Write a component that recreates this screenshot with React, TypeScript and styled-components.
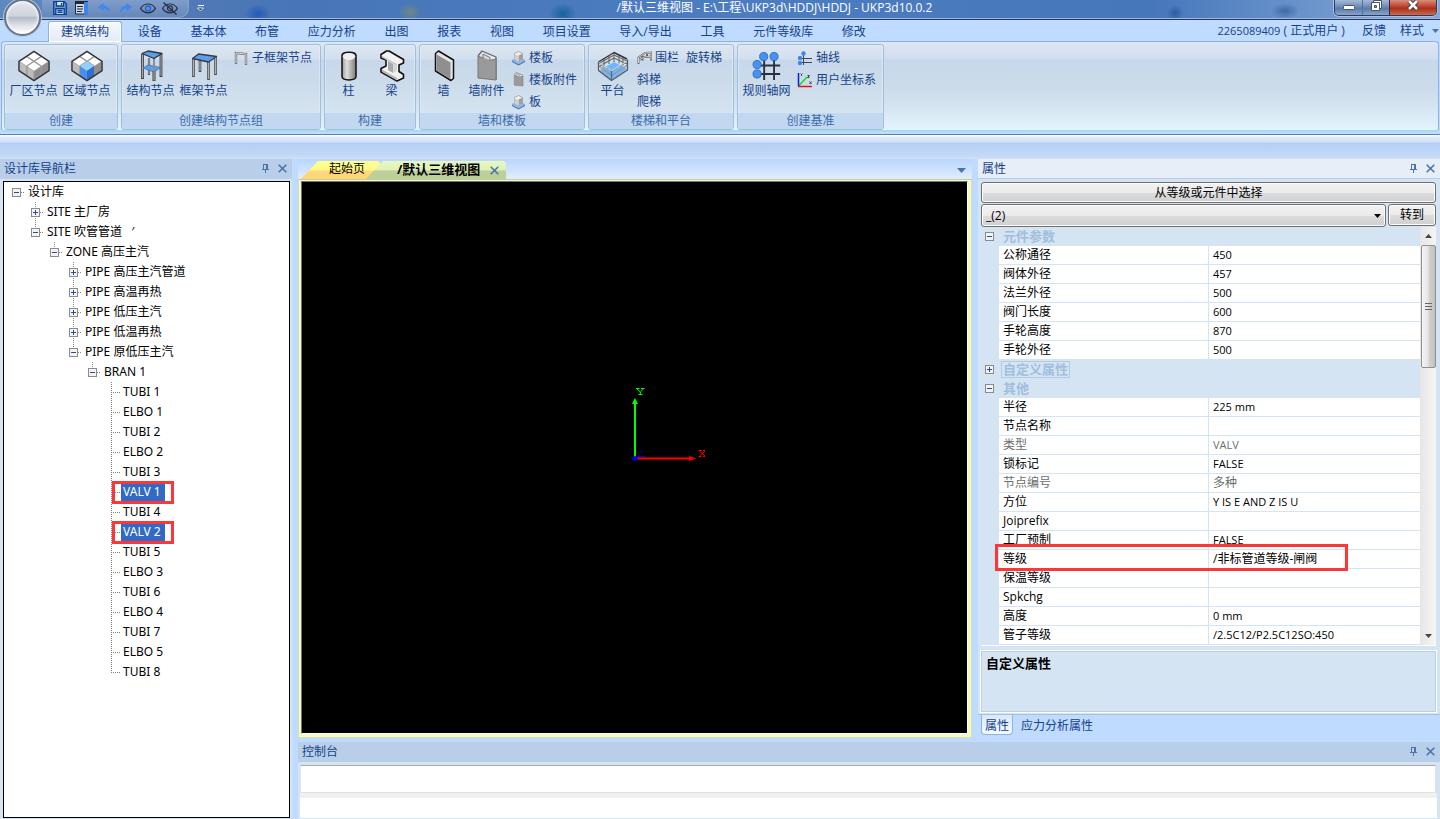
import React from 'react';
import styled, { createGlobalStyle, css } from 'styled-components';

const UI_FONT = '"Open Sans", "Noto Sans CJK SC", sans-serif';
const TREE_FONT = '"Noto Sans", "Noto Sans CJK SC", sans-serif';
const NAVY = '#15428b';

const GlobalStyle = createGlobalStyle`
  *, *::before, *::after { box-sizing: border-box; }
  body { margin: 0; background: #bfdbff; }
  button, select, textarea, input { font: inherit; color: inherit; margin: 0; padding: 0; border: 0; background: none; border-radius: 0; }
  button { cursor: pointer; white-space: nowrap; }
  a { color: inherit; text-decoration: none; }
  ul { list-style: none; margin: 0; padding: 0; }
  h2 { margin: 0; font-weight: 400; font-size: 12px; }
  svg { display: block; flex: none; }
`;

const Shell = styled.div`
  display: flex;
  flex-direction: column;
  height: 100vh;
  min-height: 640px;
  overflow: hidden;
  font: 12px/16px ${UI_FONT};
  color: #000;
  background: #bfdbff;
`;

/* ---------- Title bar ---------- */

const TitleBar = styled.header`
  flex: none;
  display: grid;
  grid-template-columns: auto 1fr auto;
  height: 20px;
  position: relative;
  border-bottom: 1px solid #27375c;
  box-shadow: inset 0 -1px 0 #9db9e0;
  background:
    radial-gradient(ellipse 13px 10px at 258px 14px, #2359b9 0%, #2359b900 100%),
    radial-gradient(ellipse 12px 9px at 410px 12px, #6f8784 0%, #6f878400 100%),
    radial-gradient(ellipse 14px 11px at 563px 14px, #17639b 0%, #17639b00 100%),
    radial-gradient(ellipse 8px 8px at 1175px 13px, #2b5ba2 0%, #2b5ba200 100%),
    radial-gradient(ellipse 14px 8px at 1285px 11px, #4069a8 0%, #4069a800 100%),
    linear-gradient(90deg, #5f88bf 0, #5079b5 200px, #4775b8 300px, #4c7dc1 50%, #4677bb 80%, #6f97cd 92%, #86a7d3 100%);
`;

const AppButton = styled.button`
  position: absolute;
  z-index: 3;
  left: 4px;
  top: -1px;
  width: 37px;
  height: 37px;
  border-radius: 50%;
  border: 2px solid #66748c;
  background: linear-gradient(#e3e6ec 0, #cfd3dc 46%, #b2b9c6 49%, #dfe3ea 75%, #ffffff 100%);
  box-shadow: 0 0 0 1px #b7c7de, inset 0 0 3px 1px #ffffff;
`;

const QuickAccess = styled.div`
  display: flex;
  align-items: center;
  gap: 6px;
  height: 18px;
  margin-left: 42px;
  padding: 0 8px 2px 10px;
  width: 147px;
  border: 1px solid #87a5cf;
  border-top: 0;
  border-left: 0;
  border-radius: 0 0 10px 0;
  background: linear-gradient(#7f9dc9, #6588bb);
`;

const QuickButton = styled.button`
  width: 16px;
  height: 16px;
  flex: none;
`;

const TitleLeft = styled.div`
  display: flex;
  gap: 7px;
  align-items: flex-start;
`;

const TitleText = styled.div`
  text-align: center;
  line-height: 16px;
  color: #fff;
  white-space: pre;
  padding-left: 10px;
`;

const WindowControls = styled.div`
  display: flex;
  height: 16px;
  margin-right: 3px;
  border: 1px solid #2c3c5c;
  border-top: 0;
  border-radius: 0 0 5px 5px;
  overflow: hidden;
  box-shadow: 0 0 0 1px #a9c1e2;
`;

const WindowButton = styled.button<{ $danger?: boolean }>`
  display: flex;
  justify-content: center;
  width: ${p => (p.$danger ? 47 : 27)}px;
  height: 15px;
  border-left: 1px solid ${p => (p.$danger ? '#4b2030' : '#5a7099')};
  background: ${p => p.$danger
    ? 'linear-gradient(#d98d7c 0, #bd4a33 40%, #a8301a 55%, #cf6a4c 100%)'
    : 'linear-gradient(#a4bad9 0, #6f8ab5 45%, #587aaa 55%, #87a4cd 100%)'};
  &:first-child { border-left: 0; }
`;

/* ---------- Ribbon ---------- */

const TabBar = styled.nav`
  flex: none;
  display: flex;
  justify-content: space-between;
  height: 22px;
  padding: 1px 5px 0 48px;
  color: ${NAVY};
`;

const TabList = styled.div`
  display: flex;
  justify-content: space-between;
  flex: 0 1 831px;
`;

const RibbonTab = styled.button<{ $active?: boolean }>`
  height: 21px;
  padding: 0 12px;
  line-height: 20px;
  border: 1px solid transparent;
  ${p => p.$active && css`
    position: relative;
    z-index: 1;
    border-color: #8db2e3;
    border-bottom: 0;
    border-radius: 3px 3px 0 0;
    background: linear-gradient(#f6faff, #e1eaf6);
    box-shadow: inset 0 0 0 1px #ffffff;
  `}
`;

const AccountBar = styled.div`
  display: flex;
  align-items: center;
  gap: 14px;
  height: 20px;
  white-space: pre;
  margin-right: -4px;
`;

const Digits = styled.span`
  font-size: 11px;
`;

const StyleMenu = styled.button`
  display: flex;
  align-items: center;
  gap: 8px;
`;

const Ribbon = styled.section`
  flex: none;
  display: flex;
  gap: 3px;
  margin: -1px 1px 0 1px;
  height: 91px;
  padding: 2px 2px 3px 2px;
  border: 1px solid #8db2e3;
  border-bottom: 2px solid #a6dcee;
  border-radius: 4px;
  background: linear-gradient(#dde7f4 0, #d1ddee 17px, #c7d8ed 18px, #cbdbe9 45px, #d6e6f3 68px, #e4f4fd 100%);
`;

const Group = styled.div<{ $width: number }>`
  display: flex;
  flex-direction: column;
  flex: 0 0 ${p => p.$width}px;
  height: 86px;
  border: 1px solid #9fbfdb;
  border-radius: 3px;
  box-shadow: inset 0 0 0 1px #e8f1fa80;
  background: linear-gradient(#dde7f3 0, #d3dfed 14px, #c8d8ec 15px, #cbdbe9 35px, #dbe8f5 100%);
  overflow: hidden;
`;

const GroupBody = styled.div`
  flex: 1;
  display: flex;
  padding: 2px 0 0 2px;
  color: ${NAVY};
`;

const GroupCaption = styled.div`
  height: 16px;
  line-height: 15px;
  text-align: center;
  color: #3e6aaa;
  background: #c1d8f0;
`;

const LargeButton = styled.button<{ $width?: number }>`
  display: flex;
  flex-direction: column;
  align-items: center;
  width: ${p => p.$width ?? 53}px;
  height: 54px;
  padding-top: 3px;
  line-height: 16px;
  flex: none;
  svg { margin-bottom: 1px; }
`;

const SmallColumn = styled.div<{ $gap?: number }>`
  display: flex;
  flex-direction: column;
  margin-left: ${p => p.$gap ?? 4}px;
`;

const SmallRow = styled.div`
  display: flex;
  gap: 7px;
`;

const SmallButton = styled.button`
  display: flex;
  align-items: center;
  gap: 3px;
  height: 22px;
  padding-bottom: 1px;
`;

const Strip = styled.div`
  flex: none;
  height: 25px;
  margin-top: 2px;
  border-top: 1px solid #5581bd;
  background: linear-gradient(#ffffff 0, #ffffff 1px, #dfeafb 2px, #d0e1f8 7px, #b4d0f4 8px, #c2d8f6 20px, #cfe0f7 100%);
`;

/* ---------- Docked panels ---------- */

const Workspace = styled.main`
  flex: 1;
  min-height: 0;
  display: grid;
  grid-template-columns: 292px minmax(0, 1fr);
  gap: 6px;
`;

const RightSide = styled.div`
  display: flex;
  flex-direction: column;
  gap: 4px;
  min-height: 0;
`;

const UpperRow = styled.div`
  flex: 1;
  min-height: 0;
  display: grid;
  grid-template-columns: minmax(0, 1fr) 462px;
  gap: 6px;
`;

const Panel = styled.section`
  display: flex;
  flex-direction: column;
  min-height: 0;
  background: #d5e4f2;
`;

const PanelHeader = styled.header<{ $light?: boolean }>`
  flex: none;
  display: flex;
  align-items: center;
  justify-content: space-between;
  height: 20px;
  padding: 0 5px 0 4px;
  color: ${NAVY};
  border-bottom: 1px solid ${p => (p.$light ? '#b5cde9' : '#b8cee9')};
  background: ${p => (p.$light ? '#e7eef7' : '#b8cee9')};
`;

const PanelTools = styled.div`
  display: flex;
  gap: 8px;
`;

const TreeBox = styled.div`
  flex: 1;
  min-height: 0;
  overflow: hidden;
  margin: 2px 2px 1px 3px;
  padding-left: 8px;
  border: 1px solid #000;
  background: #fff;
  font-family: ${TREE_FONT};
`;

const dots = 'repeating-linear-gradient(#808080 0 1px, transparent 1px 2px)';

const Branch = styled.ul`
  margin-left: 19px;
  & > li { background: ${dots} 4px 0 / 1px 100% no-repeat; }
  & > li:last-child { background-size: 1px 10px; }
`;

const TreeRow = styled.div`
  display: flex;
  align-items: center;
  height: 20px;
  white-space: pre;
`;

const Expander = styled.button`
  width: 9px;
  height: 9px;
  flex: none;
`;

const Connector = styled.span<{ $leaf?: boolean }>`
  flex: none;
  width: ${p => (p.$leaf ? 9 : 4)}px;
  height: 1px;
  margin: 0 1px 0 ${p => (p.$leaf ? 4 : 0)}px;
  background: repeating-linear-gradient(90deg, #808080 0 1px, transparent 1px 2px);
`;

const NodeLabel = styled.span<{ $selected?: boolean }>`
  position: relative;
  height: 17px;
  line-height: 16px;
  padding: 0 4px 0 2px;
  background: ${p => (p.$selected ? '#316ac5' : 'transparent')};
  color: ${p => (p.$selected ? '#fff' : '#000')};
`;

const TreeMark = styled.span`
  position: absolute;
  left: -9px;
  top: -3px;
  width: 62px;
  height: 23px;
  border: 3px solid #fb3737;
`;

/* ---------- Document area ---------- */

const DocArea = styled.section`
  display: flex;
  flex-direction: column;
  min-height: 0;
`;

const DocTabs = styled.div`
  flex: none;
  display: flex;
  align-items: flex-end;
  height: 21px;
  padding-left: 3px;
  background: linear-gradient(#b9d6fd, #e1edfd);
  border-bottom: 1px solid #c0d09a;
`;

const DocTab = styled.div<{ $active?: boolean }>`
  display: flex;
  align-items: center;
  height: 18px;
  padding-bottom: 2px;
  clip-path: polygon(17px 0, calc(100% - 2px) 0, 100% 2px, 100% 100%, 0 100%);
  ${p => p.$active
    ? css`
      width: 140px;
      margin-left: -14px;
      padding-left: 31px;
      gap: 10px;
      font-size: 13px;
      font-weight: 700;
      background: linear-gradient(#e8f8c4 0, #dff0b8 50%, #bed09a 55%, #bccf98 100%);
    `
    : css`
      width: 79px;
      padding-left: 28px;
      background: linear-gradient(#ffff9a 0, #fffa80 50%, #ffd880 55%, #ffd470 100%);
    `}
`;

const TabClose = styled.button`
  padding-top: 3px;
`;

const DocMenuButton = styled.button`
  margin: 0 6px 6px auto;
`;

const ViewportFrame = styled.div`
  flex: 1;
  min-height: 0;
  display: flex;
  padding: 1px 3px 3px 2px;
  border: 1px solid #d5e0ae;
  border-top: 0;
  background: #f4f9c8;
`;

const Viewport = styled.div`
  flex: 1;
  display: grid;
  place-items: center;
  background: #000;
  border: 1px solid #737373;
  border-right-color: #fff;
  border-bottom-color: #fff;
`;

/* ---------- Properties ---------- */

const PropBody = styled.div`
  flex: 1;
  min-height: 0;
  display: flex;
  flex-direction: column;
  padding: 3px 4px 2px 3px;
  border-bottom: 1px solid #a5c1e2;
`;

const classic = css`
  border: 1px solid #707070;
  border-radius: 3px;
  box-shadow: inset 0 0 0 1px #fcfcfc;
  background: linear-gradient(#f2f2f2 0, #ebebeb 50%, #dddddd 51%, #cfcfcf 100%);
`;

const WideButton = styled.button`
  ${classic}
  flex: none;
  height: 21px;
  line-height: 18px;
`;

const SelectRow = styled.div`
  flex: none;
  display: flex;
  gap: 2px;
  margin-top: 1px;
  height: 23px;
`;

const SelectWrap = styled.label`
  flex: 1;
  display: grid;
  align-items: center;
  & > * { grid-area: 1 / 1; }
  & > svg { justify-self: end; margin-right: 5px; pointer-events: none; }
`;

const NodeSelect = styled.select`
  ${classic}
  appearance: none;
  height: 23px;
  padding: 0 4px;
`;

const GoButton = styled.button`
  ${classic}
  width: 48px;
  height: 22px;
`;

const GridFrame = styled.div`
  flex: 1;
  min-height: 0;
  display: flex;
  border-bottom: 1px solid #fff;
`;

const GridClip = styled.div`
  flex: 1;
  overflow: hidden;
`;

const PropTable = styled.table`
  width: 100%;
  border-collapse: separate;
  border-spacing: 0;
  table-layout: fixed;
  td, th { padding: 0; height: 19px; line-height: 18px; text-align: left; font-weight: 400; white-space: nowrap; }
`;

const GutterCol = styled.col`width: 18px;`;
const NameCol = styled.col`width: 209px;`;

const CategoryLabel = styled.th`
  && { font-size: 13px; font-weight: 700; padding-left: 4px; color: #a0bfdd; }
`;

const FocusBox = styled.span<{ $focused?: boolean }>`
  display: block;
  width: max-content;
  height: 17px;
  line-height: 16px;
  ${p => p.$focused && css`
    line-height: 14px;
    margin-left: -2px;
    padding: 0 1px;
    border: 1px solid #b2cae8;
  `}
`;

const PropName = styled.th<{ $muted?: boolean }>`
  && { position: relative; padding-left: 4px; }
  background: #fff;
  color: ${p => (p.$muted ? '#6d6d6d' : '#000')};
  border-bottom: 1px solid #d5e4f2;
`;

const PropValue = styled.td<{ $muted?: boolean; $latin?: boolean }>`
  && { padding-left: 4px; }
  background: #fff;
  color: ${p => (p.$muted ? '#6d6d6d' : '#000')};
  font-size: ${p => (p.$latin ? 11 : 12)}px;
  border-bottom: 1px solid #d5e4f2;
  border-left: 1px solid #d5e4f2;
`;

const GutterCell = styled.td`
  background: #d5e4f2;
  ${Expander} { display: block; margin-left: 4px; }
`;

const PropMark = styled.span`
  position: absolute;
  z-index: 1;
  left: -4px;
  top: -6px;
  width: 353px;
  height: 27px;
  border: 3px solid #fb3737;
`;

const ScrollTrack = styled.div`
  flex: none;
  display: flex;
  flex-direction: column;
  align-items: center;
  width: 16px;
  background: linear-gradient(90deg, #e6e6e6, #f5f5f5);
`;

const ScrollArrow = styled.button<{ $end?: boolean }>`
  display: grid;
  place-items: center;
  width: 16px;
  height: 18px;
  margin-top: ${p => (p.$end ? 'auto' : 0)};
`;

const ScrollThumb = styled.div`
  display: grid;
  place-items: center;
  width: 15px;
  height: 123px;
  border: 1px solid #909090;
  border-radius: 2px;
  background: linear-gradient(90deg, #f4f4f4 0, #e6e6e6 45%, #d2d2d2 55%, #c0c0c0 100%);
`;

const Description = styled.div`
  flex: none;
  height: 61px;
  margin-top: 5px;
  padding: 3px 4px;
  font-size: 13px;
  font-weight: 700;
  border: 1px solid #b8cee9;
  box-shadow: 0 0 0 1px #fff;
`;

const BottomTabs = styled.div`
  flex: none;
  display: flex;
  gap: 4px;
  height: 23px;
  padding-left: 3px;
  background: #bfdbff;
  color: ${NAVY};
`;

const BottomTab = styled.button<{ $active?: boolean }>`
  height: 20px;
  padding: 2px 3px 0;
  border: 1px solid transparent;
  border-top: 0;
  ${p => p.$active && css`
    border-color: #8db2e3;
    border-radius: 0 0 4px 4px;
    background: linear-gradient(#dbe8f6, #f6faff);
  `}
`;

/* ---------- Console ---------- */

const Console = styled(Panel)`
  flex: none;
  height: 77px;
`;

const ConsoleLog = styled.textarea`
  flex: none;
  display: block;
  resize: none;
  height: 28px;
  margin: 3px 4px 0 2px;
  && { border: 1px solid #dbe4ee; border-top-color: #a9a9a9; background: #fff; }
`;

const ConsoleInput = styled.input`
  flex: none;
  height: 25px;
  margin: 0 3px 0 2px;
  && { border-top: 5px solid #f0f0f0; background: #fff; }
`;

/* ---------- Glyphs ---------- */

const PinIcon = () => (
  <svg width="9" height="9" viewBox="0 0 9 9" fill="none" stroke="#4b74ae" shapeRendering="crispEdges">
    <path d="M2.5 0v6M2 .5h4M1 5.5h7M4.5 6v3" /><path d="M6 0v6" strokeWidth="2" />
  </svg>
);
const CloseIcon = () => (
  <svg width="9" height="9" viewBox="0 0 9 9" stroke="#4b74ae" strokeWidth="1.6"><path d="M.7.7l7.6 7.6M8.3.7L.7 8.3" /></svg>
);
const ArrowGlyph = ({ up, color = '#4b74ae', size = 9 }: { up?: boolean; color?: string; size?: number }) => (
  <svg width={size} height={size === 9 ? 5 : 4} viewBox="0 0 9 5" preserveAspectRatio="none" fill={color}><path d={up ? 'M0 5L4.5 0 9 5z' : 'M0 0h9L4.5 5z'} /></svg>
);
const BoxGlyph = ({ open }: { open?: boolean }) => (
  <svg width="9" height="9" viewBox="0 0 9 9" shapeRendering="crispEdges">
    <rect x=".5" y=".5" width="8" height="8" fill="#f3f3f3" stroke="#8b8b8b" />
    <path d={open ? 'M2 4.5h5' : 'M2 4.5h5M4.5 2v5'} stroke="#2b4a9b" />
  </svg>
);

const SaveIcon = () => (
  <svg width="16" height="16" viewBox="0 0 16 16" fill="none" stroke="#123f8c" strokeWidth="1.3">
    <path d="M1.7 1.7h10.6l2 2v10.6H1.7z" fill="#5e97e8" /><path d="M4.5 2v4h7V2" fill="#dbe8fa" /><path d="M3.8 14V8.6h8.4V14" fill="#b8d2f5" /><path d="M5.5 10.5h5M5.5 12.3h5M9.500 3v2" />
  </svg>
);
const DocIcon = () => (
  <svg width="16" height="16" viewBox="0 0 16 16">
    <path d="M1.5 2h12v12h-12z" fill="#cbd8ec" stroke="#20242c" /><path d="M1 1h13v3H1z" fill="#20242c" /><path d="M3 6.500h6M3 9h6M3 11.500h5" stroke="#20242c" /><path d="M10 2h4v12l-2 2-2-2z" fill="#3c83ea" />
  </svg>
);
const UndoIcon = ({ flip }: { flip?: boolean }) => (
  <svg width="16" height="16" viewBox="0 0 16 16" fill="#3d87ee">
    <path transform={flip ? 'matrix(-1 0 0 1 16 0)' : undefined} d="M2 7L7.500 3v2.500c4.500.3 6.500 3 6 7.500C12.400 10 10.600 8.700 7.500 8.500V11z" />
  </svg>
);
const EyeIcon = ({ off }: { off?: boolean }) => (
  <svg width="16" height="16" viewBox="0 0 16 16" fill="none" stroke="#2a3242" strokeWidth="1.2">
    <path d="M.6 8.400C4 2.500 12 2.500 15.400 8.400 12 14.300 4 14.300.6 8.400z" /><circle cx="8" cy="8.400" r="2.500" fill={off ? 'none' : '#4f93f0'} stroke={off ? '#2a3242' : '#2660b8'} />
    {off && <path d="M1.500 2.500l13 12" strokeWidth="1.400" />}
  </svg>
);

const CubesIcon = ({ region }: { region?: boolean }) => (
  <svg width="32" height="32" viewBox="0 0 34 34" strokeLinejoin="round">
    <path d="M17 1.500L33 12v10L17 32.500 1 22V12z" fill="#a8a8a8" />
    <path d="M17 2L32 12 17 22 2 12z" fill="#fff" />
    <path d="M1.500 12.500L17 23v9L1.500 21.700z" fill="#bdbdbd" /><path d="M32.500 12.500L17 23v9l15.500-10.300z" fill="#8f8f8f" />
    <path d="M9.500 7l15 10M24.500 7l-15 10M9.500 17v9.500M24.500 17v9.500M17 23v9" stroke="#9a9a9a" strokeWidth="1.500" fill="none" />
    {region && <><path d="M17 12l7.500 5L17 22l-7.500-5z" fill="#8fd0ff" /><path d="M9.500 17l7.500 5v10l-7.500-5z" fill="#4a8fec" /><path d="M24.500 17L17 22v10l7.500-5z" fill="#2f6fce" /></>}
    <path d="M17 1.500L33 12v10L17 32.500 1 22V12z" fill="none" stroke="#333" strokeWidth="1.500" />
  </svg>
);
const TowerIcon = () => (
  <svg width="32" height="32" viewBox="0 0 32 32" strokeLinejoin="round">
    <path d="M14 8v17" stroke="#555" strokeWidth="2.200" /><path d="M14 8v16" stroke="#c4c4c4" strokeWidth=".8" />
    <path d="M7.500 4v25M26 4v23" stroke="#3a3a3a" strokeWidth="2.800" /><path d="M7.500 4v24M26 4v22" stroke="#a5a5a5" strokeWidth="1.200" />
    <path d="M8 18l5-3 13 2.500-7 4.500z" fill="#5b9df5" stroke="#4a6f9f" strokeWidth=".8" />
    <path d="M19 8v14" stroke="#8a8f96" strokeWidth="2" /><path d="M19 21v10" stroke="#555" strokeWidth="3.200" /><path d="M19 21v9" stroke="#8c8c8c" strokeWidth="1.600" />
    <path d="M7 3.500L13 1l14 2.500-8 5z" fill="#5b9df5" stroke="#333" strokeWidth="1.300" />
  </svg>
);
const FrameIcon = () => (
  <svg width="32" height="32" viewBox="0 0 32 32" strokeLinejoin="round">
    <path d="M12 10v12M5.500 9v18M27.500 7v18M20.500 12v18" stroke="#444" strokeWidth="2.600" /><path d="M12 10v11M5.500 9v17M27.500 7v17M20.500 12v17" stroke="#b0b0b0" strokeWidth="1.200" />
    <path d="M4.500 8.500l6-4.500 18 2.500-8 5.500z" fill="#5b9df5" stroke="#3a3a3a" strokeWidth="1.300" />
  </svg>
);
const SubFrameIcon = () => (
  <svg width="15" height="16" viewBox="0 0 15 16"><path d="M2 14V3l10 1v11" fill="none" stroke="#777" strokeWidth="2.400" /><path d="M2 13V3l10 1v10" fill="none" stroke="#d5d5d5" strokeWidth="1" /></svg>
);
const ColumnIcon = () => (
  <svg width="32" height="32" viewBox="0 0 32 32">
    <defs><linearGradient id="col"><stop offset="0" stopColor="#9b9b9b" /><stop offset=".35" stopColor="#dedede" /><stop offset="1" stopColor="#7c7c7c" /></linearGradient></defs>
    <path d="M9 5.500C9 1 23 1 23 5.500v21C23 31 9 31 9 26.500z" fill="url(#col)" stroke="#111" strokeWidth="1.500" /><ellipse cx="16" cy="6.500" rx="6.200" ry="3.500" fill="#f0f0f0" />
  </svg>
);
const BeamIcon = () => (
  <svg width="32" height="32" viewBox="0 0 32 32" strokeLinejoin="round">
    <path d="M5 4.500L10.500 1H13l14.500 8.500V13L23 15v6.500l4.500 3V28L21 31 5 22v-3.500l5-2.500v-6L5 8z" fill="#f2f2f2" stroke="#111" strokeWidth="1.600" />
    <path d="M5.500 5.500L21 14v2l-7-4-8-4.500z" fill="#c9c9c9" /><path d="M12 11l5 3v9l-5-3z" fill="#a9a9a9" /><path d="M17 14l4 2v5l-4 2z" fill="#d6d6d6" /><path d="M6 19.500L21 28v2.500L6 22z" fill="#b5b5b5" />
  </svg>
);
const WallIcon = () => (
  <svg width="32" height="32" viewBox="0 0 32 32" strokeLinejoin="round">
    <path d="M7.500 3.500L10.500 1 25.500 10v18.500l-2.500 2L7.500 21z" fill="#e5e5e5" stroke="#111" strokeWidth="1.500" /><path d="M8.500 4.500l14 8v16.500l-14-8.500z" fill="#8f8f8f" />
  </svg>
);
const WallPartIcon = ({ size = 32 }: { size?: number }) => (
  <svg width={size} height={size} viewBox="0 0 32 32" strokeLinejoin="round">
    <path d="M7 6l4-5 14 6v23" fill="#e4e8ee" stroke="#666" strokeWidth="1.300" /><path d="M7 6l6 2.500 5-1 .5 3 6.500-1.500V30L7 28z" fill="#9a9a9a" stroke="#777" /><path d="M12 8V4l7 3.500V10" fill="#d5d5d5" stroke="#777" />
  </svg>
);
const SlabIcon = () => (
  <svg width="15" height="16" viewBox="0 0 15 16">
    <path d="M1 10.500L7 8l7 2.500L7.500 14z" fill="#8cc8ff" stroke="#6ea9e6" /><path d="M1 11l6.500 3.500L14 11v1L7.500 15.500 1 12z" fill="#3b6fb5" />
    <path d="M3.500 3.500L7.500 1.500l4 2V10l-4 2-4-2z" fill="#f0f0f0" stroke="#999" strokeWidth=".8" /><path d="M7.500 5.500v6l4-2v-6z" fill="#a0a0a0" /><path d="M3.500 4.500l4 1.500v5.500l-4-2z" fill="#cfcfcf" />
  </svg>
);
const PlatformIcon = () => (
  <svg width="32" height="32" viewBox="0 0 32 32" strokeLinejoin="round">
    <path d="M1.500 12L17 3l13 6 1 10.500L14.500 31 2 21z" fill="#d5e2f0" />
    <path d="M2 20.500L17 12l13.500 7L14.500 30z" fill="#6db8ff" />
    <path d="M17 3v9M12 6v8M7 9v8M22 5.500v8M26 7.500v8" stroke="#777" strokeWidth="1.200" />
    <path d="M2 13.500L17 5l13 6M2 16.500L17 8l13 6" fill="none" stroke="#6a6a6a" strokeWidth="1.200" />
    <path d="M1.500 12L17 2.500 30 9" fill="none" stroke="#333" strokeWidth="1.400" />
    <path d="M1.500 12l13 9.500L30.500 11M2 16l12.500 9.500L30.500 15" fill="none" stroke="#8c959f" strokeWidth="1.300" /><path d="M1.500 12l13 9L30.500 10.500" fill="none" stroke="#e8e8e8" strokeWidth=".8" />
    <path d="M6 15v8M10.500 18v8.500M20 18v8M25 15v8" stroke="#9aa5b2" strokeWidth="1.200" />
    <path d="M1.500 12v8.500L14.500 30.500l16-10.500V9.500" fill="none" stroke="#555" strokeWidth="1.200" /><path d="M14.500 21v9" stroke="#667" strokeWidth="1.400" />
  </svg>
);
const FenceIcon = () => (
  <svg width="15" height="16" viewBox="0 0 15 16" fill="none"><path d="M1.500 14V7.500L8 3l6-.5v8M5.500 5.500v5M10 3v5M1.500 10.500L7 7l6.500-.5" stroke="#666" strokeWidth="2" /><path d="M1.500 13V7.500L8 3l6-.5v7M1.500 10.500L7 7l6.500-.5" stroke="#ddd" strokeWidth=".9" /></svg>
);
const GridIcon = () => (
  <svg width="32" height="32" viewBox="0 0 34 34">
    <path d="M14 8v24M24.500 8v24M9 16.500h22M9 25.500h22" stroke="#2a2f3a" strokeWidth="2" />
    <g fill="#4691f2" stroke="#2c6bc4"><circle cx="13.500" cy="7" r="4.300" /><circle cx="24.500" cy="7" r="4.300" /><circle cx="6.500" cy="15.500" r="4.300" /><circle cx="6.500" cy="25.500" r="4.300" /></g>
  </svg>
);
const AxisIcon = () => (
  <svg width="16" height="16" viewBox="0 0 16 16">
    <path d="M6.500 3v12M3 8.500h12M3 12.500h12" stroke="#39475c" strokeWidth="1" /><g fill="#3f86e8"><circle cx="6.500" cy="3.500" r="2.200" /><circle cx="3" cy="8" r="2.200" /><circle cx="3" cy="13" r="2.200" /></g>
  </svg>
);
const UcsIcon = () => (
  <svg width="16" height="16" viewBox="0 0 16 16" fill="none">
    <path d="M2 13.500L10 5" stroke="#12e012" strokeWidth="1.500" /><path d="M1.500 1v13" stroke="#0a1be8" strokeWidth="1.500" /><path d="M1 14.500h14" stroke="#e01030" strokeWidth="1.500" />
    <path d="M3.500 1.500l1 1 1-1M4.500 2.500v1.500M10.500 3.500h2l-2 2h2M12.500 9.500l2 2.500M14.500 9.500l-2 2.500" stroke="#222" strokeWidth=".8" />
  </svg>
);
const OverflowGlyph = () => (
  <svg width="9" height="16" viewBox="0 0 9 16"><path d="M2 5.500h6" stroke="#fff" /><path d="M1.500 8h6L4.500 11z" fill="#20385f" stroke="#fff" strokeWidth=".8" /></svg>
);
/* Square canvas with the origin of the axes at its centre. */
const AxesTriad = () => (
  <svg width="140" height="140" viewBox="-66 0 140 140" role="img" aria-label="XYZ">
    <path d="M4 70.500h56" stroke="#8b0000" strokeWidth="3" /><path d="M4 70.500h56" stroke="#f00" strokeWidth="1" /><path d="M58 68l7 2.500-7 2.500z" fill="#f00" />
    <path d="M4 70V13" stroke="#0f0" strokeWidth="2" /><path d="M4 10l3 6H1z" fill="#0f0" />
    <path d="M11.500 62.500L6.500 68.500H14" fill="none" stroke="#0000c0" /><path d="M1 70.500l3-2 3 2-3 2z" fill="#00f" stroke="#00f" />
    <path d="M5 .5h3.500M10 .5h3.500M6 1l3.300 3L12.500 1M9.300 4v3M7.500 6.500h4" fill="none" stroke="#0f0" />
    <path d="M67.500 62.500h3M72 62.500h3M68.500 63l5.500 5M74 63l-5.500 5M67.500 68.500h3M72 68.500h3" fill="none" stroke="#f00" />
  </svg>
);

/* ---------- Data ---------- */

const ribbonTabs = ['建筑结构', '设备', '基本体', '布管', '应力分析', '出图', '报表', '视图', '项目设置', '导入/导出', '工具', '元件等级库', '修改'];

type TreeNode = { label: string; children?: TreeNode[]; collapsed?: boolean; selected?: boolean };
const leaf = (label: string): TreeNode => ({ label, selected: label.startsWith('VALV') });
const closed = (label: string): TreeNode => ({ label, collapsed: true, children: [] });

const library: TreeNode = {
  label: '设计库',
  children: [
    closed('SITE 主厂房'),
    {
      label: 'SITE 吹管管道   ′',
      children: [{
        label: 'ZONE 高压主汽',
        children: [
          closed('PIPE 高压主汽管道'), closed('PIPE 高温再热'), closed('PIPE 低压主汽'), closed('PIPE 低温再热'),
          {
            label: 'PIPE 原低压主汽',
            children: [{
              label: 'BRAN 1',
              children: ['TUBI 1', 'ELBO 1', 'TUBI 2', 'ELBO 2', 'TUBI 3', 'VALV 1', 'TUBI 4', 'VALV 2', 'TUBI 5', 'ELBO 3', 'TUBI 6', 'ELBO 4', 'TUBI 7', 'ELBO 5', 'TUBI 8'].map(leaf),
            }],
          },
        ],
      }],
    },
  ],
};

type Prop = { name: string; value: string; muted?: boolean; marked?: boolean };
type Category = { title: string; open: boolean; focused?: boolean; props: Prop[] };
const categories: Category[] = [
  {
    title: '元件参数', open: true,
    props: [
      { name: '公称通径', value: '450' }, { name: '阀体外径', value: '457' }, { name: '法兰外径', value: '500' },
      { name: '阀门长度', value: '600' }, { name: '手轮高度', value: '870' }, { name: '手轮外径', value: '500' },
    ],
  },
  { title: '自定义属性', open: false, focused: true, props: [] },
  {
    title: '其他', open: true,
    props: [
      { name: '半径', value: '225 mm' }, { name: '节点名称', value: '' }, { name: '类型', value: 'VALV', muted: true },
      { name: '锁标记', value: 'FALSE' }, { name: '节点编号', value: '多种', muted: true }, { name: '方位', value: 'Y IS E AND Z IS U' },
      { name: 'Joiprefix', value: '' }, { name: '工厂预制', value: 'FALSE' }, { name: '等级', value: '/非标管道等级-闸阀', marked: true },
      { name: '保温等级', value: '' }, { name: 'Spkchg', value: '' }, { name: '高度', value: '0 mm' },
      { name: '管子等级', value: '/2.5C12/P2.5C12SO:450' }, { name: '', value: '' },
    ],
  },
];

/* ---------- Components ---------- */

const TreeItem = ({ node }: { node: TreeNode }) => (
  <li>
    <TreeRow>
      {node.children && <Expander aria-label={node.collapsed ? '展开' : '折叠'}><BoxGlyph open={!node.collapsed} /></Expander>}
      <Connector $leaf={!node.children} />
      <NodeLabel $selected={node.selected}>
        {node.label}
        {node.selected && <TreeMark />}
      </NodeLabel>
    </TreeRow>
    {node.children && node.children.length > 0 && (
      <Branch>{node.children.map(child => <TreeItem key={child.label} node={child} />)}</Branch>
    )}
  </li>
);

const Tools = () => (
  <PanelTools>
    <button aria-label="自动隐藏"><PinIcon /></button>
    <button aria-label="关闭"><CloseIcon /></button>
  </PanelTools>
);

const RibbonGroup = ({ caption, width, children }: { caption: string; width: number; children: React.ReactNode }) => (
  <Group $width={width}>
    <GroupBody>{children}</GroupBody>
    <GroupCaption>{caption}</GroupCaption>
  </Group>
);

const RibbonGroups = () => (
  <Ribbon>
    <RibbonGroup caption="创建" width={114}>
      <LargeButton><CubesIcon />厂区节点</LargeButton>
      <LargeButton><CubesIcon region />区域节点</LargeButton>
    </RibbonGroup>
    <RibbonGroup caption="创建结构节点组" width={200}>
      <LargeButton><TowerIcon />结构节点</LargeButton>
      <LargeButton><FrameIcon />框架节点</LargeButton>
      <SmallColumn><SmallButton><SubFrameIcon />子框架节点</SmallButton></SmallColumn>
    </RibbonGroup>
    <RibbonGroup caption="构建" width={92}>
      <LargeButton $width={43}><ColumnIcon />柱</LargeButton>
      <LargeButton $width={43}><BeamIcon />梁</LargeButton>
    </RibbonGroup>
    <RibbonGroup caption="墙和楼板" width={166}>
      <LargeButton $width={43}><WallIcon />墙</LargeButton>
      <LargeButton $width={43}><WallPartIcon />墙附件</LargeButton>
      <SmallColumn $gap={3}>
        <SmallButton><SlabIcon />楼板</SmallButton>
        <SmallButton><WallPartIcon size={15} />楼板附件</SmallButton>
        <SmallButton><SlabIcon />板</SmallButton>
      </SmallColumn>
    </RibbonGroup>
    <RibbonGroup caption="楼梯和平台" width={146}>
      <LargeButton $width={43}><PlatformIcon />平台</LargeButton>
      <SmallColumn $gap={3}>
        <SmallRow><SmallButton><FenceIcon />围栏</SmallButton><SmallButton>旋转梯</SmallButton></SmallRow>
        <SmallButton>斜梯</SmallButton>
        <SmallButton>爬梯</SmallButton>
      </SmallColumn>
    </RibbonGroup>
    <RibbonGroup caption="创建基准" width={147}>
      <LargeButton><GridIcon />规则轴网</LargeButton>
      <SmallColumn>
        <SmallButton><AxisIcon />轴线</SmallButton>
        <SmallButton><UcsIcon />用户坐标系</SmallButton>
      </SmallColumn>
    </RibbonGroup>
  </Ribbon>
);

const isLatin = (text: string) => /^[\x20-\x7e]*$/.test(text);

const PropertyGrid = () => (
  <PropTable>
    <colgroup><GutterCol /><NameCol /><col /></colgroup>
    <tbody>
      {categories.map(category => (
        <React.Fragment key={category.title}>
          <tr>
            <GutterCell><Expander aria-label={category.title}><BoxGlyph open={category.open} /></Expander></GutterCell>
            <CategoryLabel colSpan={2}><FocusBox $focused={category.focused}>{category.title}</FocusBox></CategoryLabel>
          </tr>
          {category.props.map(prop => (
            <tr key={prop.name}>
              <GutterCell />
              <PropName scope="row" $muted={prop.muted}>{prop.name}{prop.marked && <PropMark />}</PropName>
              <PropValue $muted={prop.muted} $latin={isLatin(prop.value)}>{prop.value}</PropValue>
            </tr>
          ))}
        </React.Fragment>
      ))}
    </tbody>
  </PropTable>
);

export default function App() {
  return (
    <Shell>
      <GlobalStyle />
      <TitleBar>
        <AppButton aria-label="主菜单" />
        <TitleLeft>
          <QuickAccess>
            <QuickButton aria-label="保存"><SaveIcon /></QuickButton>
            <QuickButton aria-label="文档"><DocIcon /></QuickButton>
            <QuickButton aria-label="撤销"><UndoIcon /></QuickButton>
            <QuickButton aria-label="重做"><UndoIcon flip /></QuickButton>
            <QuickButton aria-label="显示"><EyeIcon /></QuickButton>
            <QuickButton aria-label="隐藏"><EyeIcon off /></QuickButton>
          </QuickAccess>
          <button aria-label="自定义快速访问工具栏"><OverflowGlyph /></button>
        </TitleLeft>
        <TitleText>{'/默认三维视图 - E:\\工程\\UKP3d\\HDDJ\\HDDJ - UKP3d10.0.2'}</TitleText>
        <WindowControls>
          <WindowButton aria-label="最小化">
            <svg width="14" height="15"><rect x="1.500" y="5.500" width="11" height="4" rx="1" fill="#fff" stroke="#4a5468" /></svg>
          </WindowButton>
          <WindowButton aria-label="还原">
            <svg width="13" height="15" stroke="#4a5468"><path d="M3.500.5h8v8h-8z" fill="#fff" /><path d="M1.500 2.500h8v8h-8z" fill="#fff" /><path d="M4.500 5.500h2v2h-2z" fill="#6f8ab5" /></svg>
          </WindowButton>
          <WindowButton $danger aria-label="关闭">
            <svg width="14" height="15"><path d="M3 1l8 8M11 1L3 9" stroke="#54303a" strokeWidth="4.500" /><path d="M3 1l8 8M11 1L3 9" stroke="#fff" strokeWidth="2.500" /></svg>
          </WindowButton>
        </WindowControls>
      </TitleBar>

      <TabBar>
        <TabList>
          {ribbonTabs.map((tab, i) => <RibbonTab key={tab} $active={i === 0}>{tab}</RibbonTab>)}
        </TabList>
        <AccountBar>
          <span><Digits>2265089409</Digits>{' ( 正式用户 ) '}</span>
          <a href="#feedback">反馈</a>
          <StyleMenu>样式<ArrowGlyph size={7} /></StyleMenu>
        </AccountBar>
      </TabBar>

      <RibbonGroups />
      <Strip />

      <Workspace>
        <Panel>
          <PanelHeader><h2>设计库导航栏</h2><Tools /></PanelHeader>
          <TreeBox><ul><TreeItem node={library} /></ul></TreeBox>
        </Panel>

        <RightSide>
          <UpperRow>
            <DocArea>
              <DocTabs>
                <DocTab><button>起始页</button></DocTab>
                <DocTab $active><button>/默认三维视图</button><TabClose aria-label="关闭"><CloseIcon /></TabClose></DocTab>
                <DocMenuButton aria-label="窗口列表"><ArrowGlyph /></DocMenuButton>
              </DocTabs>
              <ViewportFrame>
                <Viewport><AxesTriad /></Viewport>
              </ViewportFrame>
            </DocArea>

            <Panel>
              <PanelHeader $light><h2>属性</h2><Tools /></PanelHeader>
              <PropBody>
                <WideButton>从等级或元件中选择</WideButton>
                <SelectRow>
                  <SelectWrap>
                    <NodeSelect aria-label="节点" defaultValue="2"><option value="2">_(2)</option></NodeSelect>
                    <ArrowGlyph color="#000" size={7} />
                  </SelectWrap>
                  <GoButton>转到</GoButton>
                </SelectRow>
                <GridFrame>
                  <GridClip><PropertyGrid /></GridClip>
                  <ScrollTrack>
                    <ScrollArrow aria-label="向上滚动"><ArrowGlyph up color="#444" size={7} /></ScrollArrow>
                    <ScrollThumb>
                      <svg width="7" height="8" stroke="#666" shapeRendering="crispEdges"><path d="M0 .5h7M0 3.500h7M0 6.500h7" /></svg>
                    </ScrollThumb>
                    <ScrollArrow $end aria-label="向下滚动"><ArrowGlyph color="#444" size={7} /></ScrollArrow>
                  </ScrollTrack>
                </GridFrame>
                <Description>自定义属性</Description>
              </PropBody>
              <BottomTabs>
                <BottomTab $active>属性</BottomTab>
                <BottomTab>应力分析属性</BottomTab>
              </BottomTabs>
            </Panel>
          </UpperRow>

          <Console>
            <PanelHeader><h2>控制台</h2><Tools /></PanelHeader>
            <ConsoleLog aria-label="输出" readOnly />
            <ConsoleInput aria-label="命令" />
          </Console>
        </RightSide>
      </Workspace>
    </Shell>
  );
}
